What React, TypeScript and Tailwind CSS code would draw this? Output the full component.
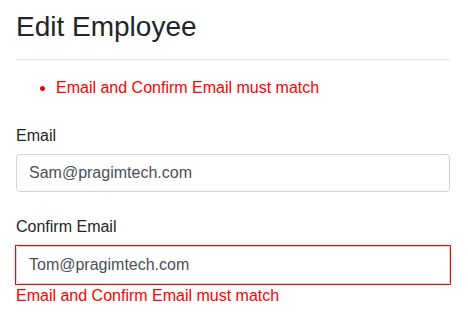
import React from "react";

export default function App() {
  return (
    <div
      className="w-[468px] h-[317px] bg-white overflow-hidden text-[#212529] text-[16px] leading-[24px]"
      style={{ fontFamily: '"Liberation Sans", Arial, sans-serif' }}
    >
      <div className="ml-[16px] w-[434px] pt-[10px]">
        <h2 className="text-[28px] leading-[34px] font-normal">Edit Employee</h2>
        <hr className="mt-[15px] border-0 border-t border-[#e5e5e5]" />
        <ul className="mt-[16px] list-disc pl-[40px] text-[#ff0000]">
          <li>Email and Confirm Email must match</li>
        </ul>
        <div className="mt-[24px]">
          <label className="block">Email</label>
          <input
            readOnly
            value="Sam@pragimtech.com"
            className="mt-[6px] block w-full h-[38px] px-[12px] py-[6px] border border-[#ced4da] rounded-[4px] text-[#495057] bg-white outline-none"
            style={{ fontFamily: '"Liberation Sans", Arial, sans-serif', fontSize: 16 }}
          />
        </div>
        <div className="mt-[23px]">
          <label className="block">Confirm Email</label>
          <div className="mt-[6px] -mx-px border border-[#ff0000]">
            <input
              readOnly
              value="Tom@pragimtech.com"
              className="block w-full h-[38px] px-[12px] py-[6px] border border-[#ced4da] rounded-[4px] text-[#495057] bg-white outline-none"
              style={{ fontFamily: '"Liberation Sans", Arial, sans-serif', fontSize: 16 }}
            />
          </div>
          <span className="block -mt-px text-[#ff0000]">Email and Confirm Email must match</span>
        </div>
      </div>
    </div>
  );
}
